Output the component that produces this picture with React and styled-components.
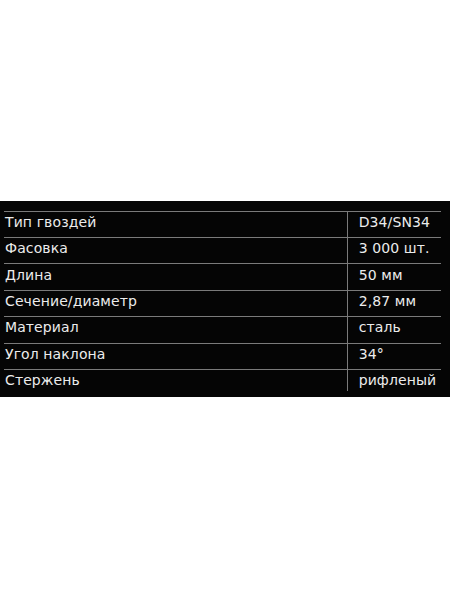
import React from "react";
import styled, { createGlobalStyle } from "styled-components";

const Global = createGlobalStyle`
  html, body { margin: 0; padding: 0; background: #ffffff; }
  body { font-family: "DejaVu Sans", "Noto Sans", sans-serif; }
`;

const Page = styled.div`
  width: 450px;
  height: 600px;
  display: flex;
  flex-direction: column;
  padding-top: 200.5px;
  box-sizing: border-box;
`;

const Panel = styled.div`
  background: #050505;
  padding: 10px 9px 5px 4px;
  height: 196.5px;
  box-sizing: border-box;
`;

const Table = styled.div`
  display: grid;
  grid-template-columns: 342.7px 1fr;
`;

const Cell = styled.div`
  height: ${(p) => (p.$last ? "21.7px" : "26.43px")};
  box-sizing: border-box;
  border-top: 1px solid #7a7a7a;
  border-left: ${(p) => (p.$value ? "1px solid #7a7a7a" : "none")};
  padding: ${(p) => (p.$value ? "3.3px 0 0 11px" : "3.3px 0 0 1px")};
  color: #ececec;
  font-size: 14px;
  letter-spacing: 0.1px;
  line-height: 15px;
  white-space: nowrap;
`;

const rows = [
  ["Тип гвоздей", "D34/SN34"],
  ["Фасовка", "3 000 шт."],
  ["Длина", "50 мм"],
  ["Сечение/диаметр", "2,87 мм"],
  ["Материал", "сталь"],
  ["Угол наклона", "34°"],
  ["Стержень", "рифленый"],
];

export default function App() {
  return (
    <Page>
      <Global />
      <Panel>
        <Table>
          {rows.map(([k, v], i) => (
            <React.Fragment key={k}>
              <Cell $last={i === rows.length - 1}>{k}</Cell>
              <Cell $value $last={i === rows.length - 1}>{v}</Cell>
            </React.Fragment>
          ))}
        </Table>
      </Panel>
    </Page>
  );
}
